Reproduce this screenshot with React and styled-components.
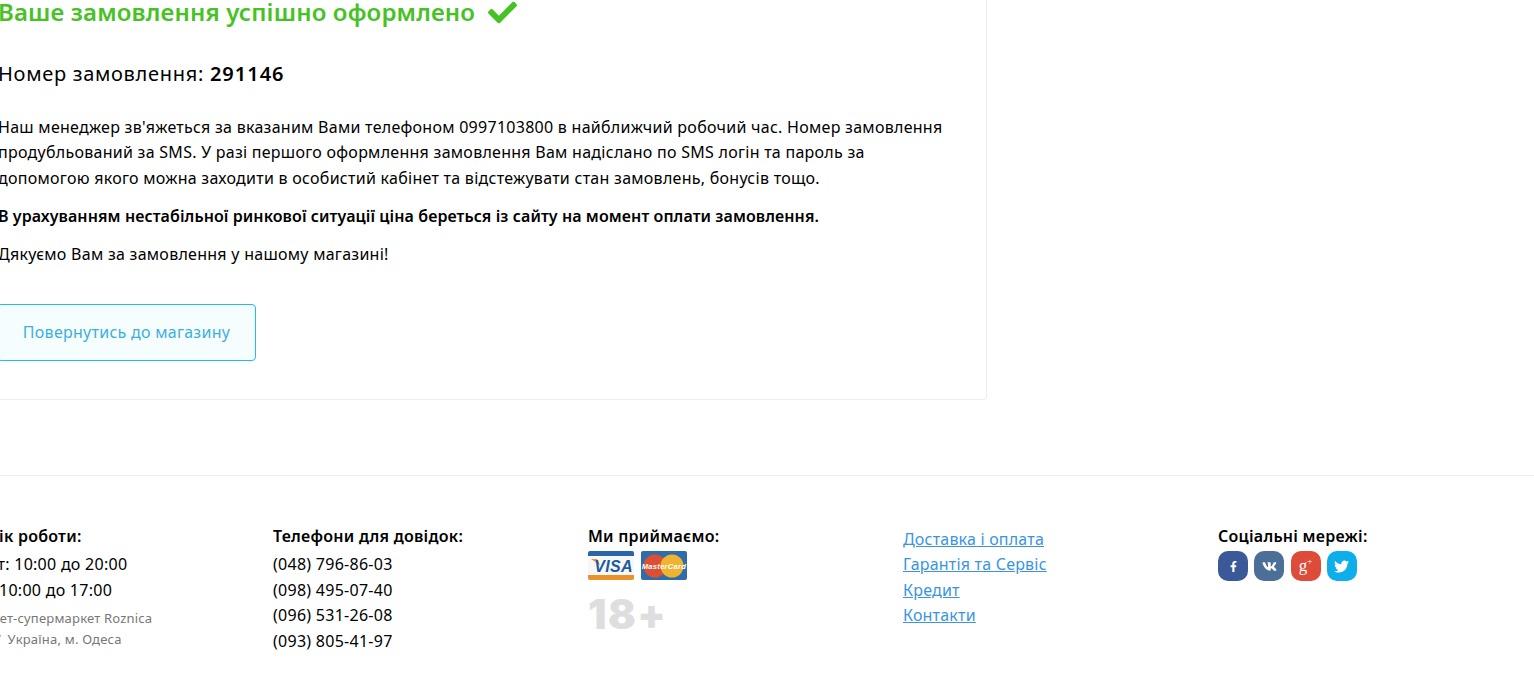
import React from 'react';
import styled, { createGlobalStyle } from 'styled-components';
import { FaCheck, FaFacebookF, FaVk, FaTwitter } from 'react-icons/fa';

const GlobalStyle = createGlobalStyle`
  html, body {
    margin: 0;
    padding: 0;
    background: #fff;
    overflow: hidden;
  }
  body {
    font-family: "Noto Sans", "Open Sans", sans-serif;
    font-size: 16px;
    letter-spacing: 0.27px;
    line-height: 25.6px;
    color: #000;
  }
`;

const Page = styled.div`
  width: 1534px;
  height: 678px;
  overflow: hidden;
`;

const Card = styled.section`
  box-sizing: border-box;
  width: 1029px;
  height: 412px;
  margin: -12px 0 0 -42px;
  padding: 0 40px 0 39px;
  border: 1px solid #ededed;
  border-radius: 4px;
`;

const Title = styled.h1`
  display: flex;
  align-items: center;
  gap: 13px;
  margin: 0;
  height: 46px;
  font-size: 24px;
  font-weight: 600;
  letter-spacing: 0.15px;
  line-height: 46px;
  color: #47c225;
  white-space: nowrap;
`;

const OrderNumber = styled.div`
  margin-top: 26px;
  font-size: 20px;
  letter-spacing: 0.7px;
  line-height: 26px;
  b {
    font-weight: 600;
    letter-spacing: 1px;
  }
`;

const Text = styled.p`
  margin: 0 0 12.8px;
  font-weight: ${props => (props.$bold ? 600 : 400)};
  letter-spacing: ${props => (props.$bold ? '0.08px' : 'inherit')};
  white-space: nowrap;
`;

const Body = styled.div`
  margin-top: 27.5px;
`;

const BackButton = styled.a`
  box-sizing: border-box;
  display: inline-flex;
  align-items: center;
  justify-content: center;
  width: 259px;
  height: 57px;
  margin: 23.5px 0 0 -1px;
  background: #f5fdff;
  border: 1px solid #22bde6;
  border-radius: 4px;
  color: #3cb0dc;
`;

const Footer = styled.footer`
  margin: 75px 0 0;
  padding: 49px 0 0;
  border-top: 1px solid #efefef;
`;

const FooterRow = styled.div`
  display: grid;
  grid-template-columns: repeat(5, 315px);
  margin: 0 0 0 -42px;
`;

const Column = styled.div`
  white-space: nowrap;
`;

const Heading = styled.div`
  font-weight: 600;
  letter-spacing: 0.25px;
  line-height: 22px;
  margin-bottom: ${props => (props.$tight ? 4 : 5)}px;
`;

// the part of a line that falls off the left edge of the page
const Prefix = styled.span`
  letter-spacing: ${props => props.$spacing}px;
`;

const Address = styled.div`
  margin-top: 5px;
  font-size: 13px;
  letter-spacing: 0.2px;
  line-height: 21px;
  color: #777;
`;

const FooterLink = styled.a`
  display: block;
  color: #3a94df;
  letter-spacing: 0.2px;
  text-decoration: underline;
`;

const LinkList = styled.div`
  margin-top: 1.7px;
`;

const Cards = styled.div`
  display: flex;
  gap: 7px;
`;

const PayCard = styled.svg`
  display: block;
  width: 46px;
  height: 29px;
`;

const Adult = styled.div`
  margin-top: 14px;
  font-family: "Inter", sans-serif;
  font-weight: 900;
  font-size: 41px;
  letter-spacing: 1.5px;
  line-height: 40px;
  color: #dedede;
`;

const Socials = styled.div`
  display: flex;
  gap: 6.3px;
`;

const Social = styled.span`
  display: flex;
  align-items: center;
  justify-content: center;
  width: 30px;
  height: 30px;
  border-radius: 10px;
  color: #fff;
  font-size: 11px;
  background: ${props => props.$bg};
`;

const GooglePlus = styled.span`
  font-family: "Liberation Serif", serif;
  font-size: 17px;
  line-height: 30px;
  letter-spacing: 0;
  sup {
    font-size: 9px;
    line-height: 0;
  }
`;

const Visa = () => (
  <PayCard viewBox="0 0 46 29">
    <rect width="46" height="29" rx="2" fill="#f7f7f7" />
    <path d="M0 2a2 2 0 0 1 2-2h42a2 2 0 0 1 2 2v3H0z" fill="#2a65a8" />
    <path d="M0 24h46v3a2 2 0 0 1-2 2H2a2 2 0 0 1-2-2z" fill="#e8922a" />
    <path d="M3 8h6l3 6z" fill="#e8922a" />
    <text x="25.5" y="20.5" textAnchor="middle" fontFamily="Liberation Sans" fontWeight="700" fontStyle="italic" fontSize="16" fill="#1f5a9e">VISA</text>
  </PayCard>
);

const MasterCard = () => (
  <PayCard viewBox="0 0 46 29">
    <rect width="46" height="29" rx="2" fill="#2f6cab" />
    <circle cx="14" cy="15" r="11.5" fill="#dd4f33" />
    <circle cx="31" cy="15" r="11.5" fill="#eeb42f" />
    <text x="23" y="17.5" textAnchor="middle" fontFamily="Liberation Sans" fontWeight="700" fontStyle="italic" fontSize="7.6" fill="#fff">MasterCard</text>
  </PayCard>
);

const App = () => (
  <Page>
    <GlobalStyle />
    <Card>
      <Title>
        Ваше замовлення успішно оформлено
        <FaCheck size={29} />
      </Title>
      <OrderNumber>Номер замовлення: <b>291146</b></OrderNumber>
      <Body>
        <Text>
          Наш менеджер зв'яжеться за вказаним Вами телефоном 0997103800 в найближчий робочий час. Номер замовлення<br />
          продубльований за SMS. У разі першого оформлення замовлення Вам надіслано по SMS логін та пароль за<br />
          допомогою якого можна заходити в особистий кабінет та відстежувати стан замовлень, бонусів тощо.
        </Text>
        <Text $bold>В урахуванням нестабільної ринкової ситуації ціна береться із сайту на момент оплати замовлення.</Text>
        <Text>Дякуємо Вам за замовлення у нашому магазині!</Text>
      </Body>
      <BackButton>Повернутись до магазину</BackButton>
    </Card>
    <Footer>
      <FooterRow>
        <Column>
          <Heading>Графік роботи:</Heading>
          <div>Пн-Пт: 10:00 до 20:00</div>
          <div><Prefix $spacing={-2}>Сб-Нд: </Prefix>10:00 до 17:00</div>
          <Address>
            Інтернет-супермаркет Roznica<br />
            <Prefix $spacing={1.5}>65007 </Prefix>Україна, м. Одеса
          </Address>
        </Column>
        <Column>
          <Heading>Телефони для довідок:</Heading>
          <div>(048) 796-86-03</div>
          <div>(098) 495-07-40</div>
          <div>(096) 531-26-08</div>
          <div>(093) 805-41-97</div>
        </Column>
        <Column>
          <Heading $tight>Ми приймаємо:</Heading>
          <Cards>
            <Visa />
            <MasterCard />
          </Cards>
          <Adult>18+</Adult>
        </Column>
        <Column>
          <LinkList>
            <FooterLink>Доставка і оплата</FooterLink>
            <FooterLink>Гарантія та Сервіс</FooterLink>
            <FooterLink>Кредит</FooterLink>
            <FooterLink>Контакти</FooterLink>
          </LinkList>
        </Column>
        <Column>
          <Heading $tight>Соціальні мережі:</Heading>
          <Socials>
            <Social $bg="#3b5998"><FaFacebookF /></Social>
            <Social $bg="#4c6f97"><FaVk size={15} /></Social>
            <Social $bg="#dd4b39"><GooglePlus>g<sup>+</sup></GooglePlus></Social>
            <Social $bg="#0eaeea"><FaTwitter size={15} /></Social>
          </Socials>
        </Column>
      </FooterRow>
    </Footer>
  </Page>
);

export default App;
